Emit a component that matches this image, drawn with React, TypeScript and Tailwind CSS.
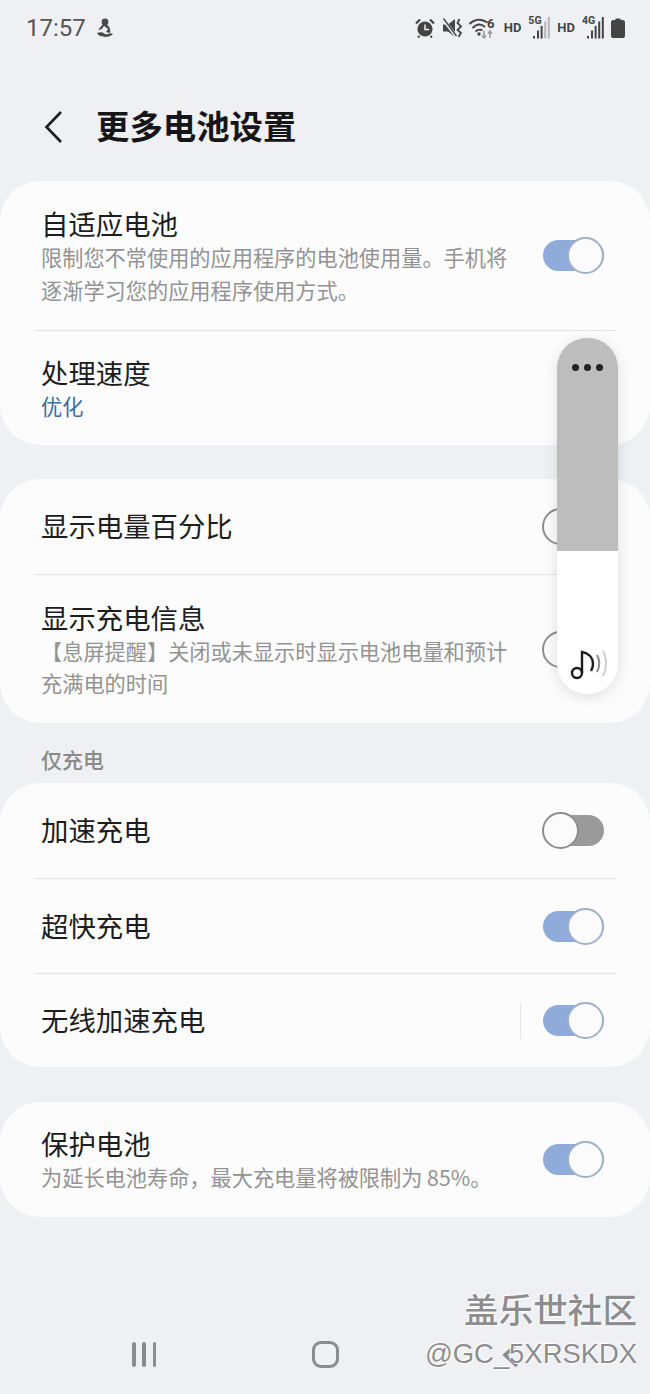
import type { ReactNode } from 'react';

const cjk = "font-['Noto_Sans_CJK_SC','Noto_Sans',sans-serif]";

function Toggle({ on }: { on: boolean }) {
  return (
    <div className={`relative h-[31px] w-[61px] shrink-0 rounded-full ${on ? 'bg-[#8fabd9]' : 'bg-[#9a9a9a]'}`}>
      <div
        className={`absolute top-[-3px] size-[37px] rounded-full border-2 bg-[#fbfbfb] ${
          on ? 'right-0 border-[#9fb0c8]' : 'left-[-1px] border-[#8e8e8e]'
        }`}
      />
    </div>
  );
}

function Row({
  title,
  sub,
  on,
  height,
  last,
  accent,
  sep,
}: {
  title: string;
  sub?: ReactNode;
  on?: boolean;
  height: string;
  last?: boolean;
  accent?: boolean;
  sep?: boolean;
}) {
  return (
    <div
      className={`ml-[34px] mr-[33px] flex items-center justify-between pl-[7px] pr-[13px] ${height} ${
        last ? '' : 'border-b border-[#e4e4e6]'
      }`}
    >
      <div className={`w-[470px] ${sub ? '' : 'pb-[3px]'}`}>
        <div className="text-[27.4px] leading-[36px] text-[#1d1d1f]">{title}</div>
        {sub && (
          <div className={`text-[21.2px] leading-[32.5px] ${accent ? 'text-[#3f6d9e]' : 'text-[#939393]'}`}>{sub}</div>
        )}
      </div>
      <div className="flex items-center">
        {sep && <div className="mr-[22px] h-[36px] w-px bg-[#e6e6e8]" />}
        {on !== undefined && <Toggle on={on} />}
      </div>
    </div>
  );
}

function StatusIcons() {
  return (
    <div className="flex items-center text-[#444]">
      {/* alarm */}
      <svg width="20" height="20" viewBox="0 0 20 20" className="text-[#444]">
        <circle cx="10" cy="11" r="7.6" fill="currentColor" />
        <path d="M10 6.5V11.5H14" fill="none" stroke="#eef0f4" strokeWidth="1.5" />
        <path d="M1 5.5 5 1.5M19 5.5 15 1.5" stroke="currentColor" strokeWidth="2.2" />
        <path d="M4.5 18 3 19.5M15.5 18 17 19.5" stroke="currentColor" strokeWidth="2" />
      </svg>
      {/* mute with vibrate */}
      <svg width="20" height="20" viewBox="0 0 20 20" className="ml-[8px]">
        <path d="M0 6.5H5L12 1V19L5 13.5H0Z" fill="currentColor" />
        <path d="M0 1 13 18" stroke="#eef0f4" strokeWidth="3.2" />
        <path d="M0.5 0.5 13.5 18" stroke="currentColor" strokeWidth="1.4" />
        <path d="M16.5 1 14.5 5 18 8.5 14.5 12 18 15 15.5 19" fill="none" stroke="currentColor" strokeWidth="1.8" />
      </svg>
      {/* wifi 6 */}
      <svg width="26" height="24" viewBox="0 0 26 24" className="ml-[6px]">
        <path d="M0.5 8C6 2.5 13 2.5 18.5 6.5" fill="none" stroke="currentColor" strokeWidth="2" />
        <path d="M3.5 12C8 7.5 12 7.5 16 11" fill="none" stroke="currentColor" strokeWidth="2" />
        <path d="M6.5 15.5C9.5 13 11 13 13.5 14.5" fill="none" stroke="currentColor" strokeWidth="2" />
        <circle cx="10" cy="18" r="1.7" fill="currentColor" />
        <path d="M15 15V22M13 19.5 15 22 17 19.5" fill="none" stroke="#9b9b9b" strokeWidth="1.6" />
        <path d="M21 22V15M19 17.5 21 15 23 17.5" fill="none" stroke="#9b9b9b" strokeWidth="1.6" />
        <text x="18" y="12" fontSize="13" fontWeight="700" fontFamily="Roboto, sans-serif" fill="currentColor">
          6
        </text>
      </svg>
      <span className="ml-[9px] font-['Roboto',sans-serif] text-[13px] font-bold">HD</span>
      <Signal label="5G" dim className="ml-[7px]" />
      <span className="ml-[6px] font-['Roboto',sans-serif] text-[13px] font-bold">HD</span>
      <Signal label="4G" className="ml-[7px]" />
      {/* battery */}
      <svg width="14" height="20" viewBox="0 0 14 20" className="ml-[6px]">
        <path d="M4.5 0.5H9.5V2H12C13 2 14 3 14 4V18C14 19 13 20 12 20H2C1 20 0 19 0 18V4C0 3 1 2 2 2H4.5Z" fill="currentColor" />
      </svg>
    </div>
  );
}

function Signal({ label, dim, className }: { label: string; dim?: boolean; className?: string }) {
  const bars = [8, 12.5, 17, 21.5];
  return (
    <div className={`relative h-[24px] w-[23px] ${className ?? ''}`}>
      <span className="absolute left-0 top-[-2px] font-['Roboto',sans-serif] text-[10.5px] font-bold leading-[14px]">
        {label}
      </span>
      <svg width="23" height="24" viewBox="0 0 23 24" className="absolute inset-0">
        <rect x="5" y="20" width="2" height="2.5" fill="currentColor" />
        {bars.map((h, i) => (
          <rect
            key={h}
            x={9 + i * 3.6}
            y={22.5 - h}
            width="2"
            height={h}
            fill={dim && i > 1 ? '#b5b5b5' : 'currentColor'}
          />
        ))}
      </svg>
    </div>
  );
}

export default function App() {
  return (
    <div className={`relative h-[1394px] w-[650px] overflow-hidden bg-[#eef0f4] ${cjk}`}>
      {/* status bar */}
      <div className="flex h-[56px] items-center justify-between pl-[26px] pr-[25px]">
        <div className="flex items-center">
          <span className="font-['Roboto',sans-serif] text-[24px] text-[#555]">17:57</span>
          <svg width="18" height="20" viewBox="0 0 18 20" className="ml-[10px] text-[#4b4b4b]">
            <circle cx="9" cy="4" r="3.4" fill="currentColor" />
            <path d="M7 6 2 12 6 11 8 8 12 11 10 14 14 15C15 11 13 7 9 6Z" fill="currentColor" />
            <path d="M1 15C3 19.5 13 20.5 17 16C14 14 12 17 9 16C7 14 4 14 1 15Z" fill="currentColor" />
          </svg>
        </div>
        <StatusIcons />
      </div>

      {/* header */}
      <div className="flex h-[125px] items-start pl-[44px] pt-[50px]">
        <svg width="20" height="34" viewBox="0 0 20 34" className="mt-[4px] text-[#1d1d1f]">
          <path d="M17 2 2.5 17 17 32" fill="none" stroke="currentColor" strokeWidth="2.6" />
        </svg>
        <h1 className="ml-[32px] text-[33.4px] font-bold leading-[38px] text-[#161618]">更多电池设置</h1>
      </div>

      {/* settings */}
      <div className="rounded-[40px] bg-[#fcfcfd]">
        <Row
          title="自适应电池"
          sub="限制您不常使用的应用程序的电池使用量。手机将逐渐学习您的应用程序使用方式。"
          on
          height="h-[150px]"
        />
        <Row title="处理速度" sub="优化" accent height="h-[114px]" last />
      </div>

      <div className="mt-[34px] rounded-[40px] bg-[#fcfcfd]">
        <Row title="显示电量百分比" on={false} height="h-[96px]" />
        <Row
          title="显示充电信息"
          sub="【息屏提醒】关闭或未显示时显示电池电量和预计充满电的时间"
          on={false}
          height="h-[148px]"
          last
        />
      </div>

      <div className="pl-[41px] pt-[23px] text-[21px] font-medium leading-[26px] text-[#8a8a8d]">仅充电</div>

      <div className="mt-[11px] rounded-[40px] bg-[#fcfcfd]">
        <Row title="加速充电" on={false} height="h-[96px]" />
        <Row title="超快充电" on height="h-[95px]" />
        <Row title="无线加速充电" on sep height="h-[93px]" last />
      </div>

      <div className="mt-[35px] rounded-[40px] bg-[#fcfcfd]">
        <Row title="保护电池" sub="为延长电池寿命，最大充电量将被限制为 85%。" on height="h-[115px]" last />
      </div>

      {/* nav bar */}
      <div className="mt-[124px] flex items-center pl-[132px]">
        <div className="flex w-[24px] justify-between">
          <div className="h-[25px] w-[3.5px] rounded-full bg-[#8b8b8e]" />
          <div className="h-[25px] w-[3.5px] rounded-full bg-[#8b8b8e]" />
          <div className="h-[25px] w-[3.5px] rounded-full bg-[#8b8b8e]" />
        </div>
        <div className="ml-[156px] size-[27px] rounded-[9px] border-[3.5px] border-[#8b8b8e]" />
      </div>

      {/* floating sound panel */}
      <div className="absolute left-[557px] top-[338px] flex h-[356px] w-[61px] flex-col overflow-hidden rounded-[30px] bg-white shadow-[0_3px_14px_rgba(0,0,0,0.12)]">
        <div className="flex h-[213px] justify-center gap-[5px] bg-[#bdbdbd] pt-[26px]">
          <div className="size-[7px] rounded-full bg-[#222]" />
          <div className="size-[7px] rounded-full bg-[#222]" />
          <div className="size-[7px] rounded-full bg-[#222]" />
        </div>
        <div className="flex flex-1 items-end pb-[14px] pl-[13px]">
          <svg width="38" height="32" viewBox="0 0 38 32">
            <circle cx="7" cy="25" r="5" fill="none" stroke="#1b1b1b" strokeWidth="2.4" />
            <path d="M12 25V4C18 5 23 9 23 16 23 19 22 21 21 23" fill="none" stroke="#1b1b1b" strokeWidth="2.4" />
            <path d="M27 7C30 12 30 19 27 24" fill="none" stroke="#8a8a8a" strokeWidth="2" />
            <path d="M33 3C37 10 37 20 33 28" fill="none" stroke="#d0d0d0" strokeWidth="2" />
          </svg>
        </div>
      </div>

      {/* back key, under the watermark */}
      <svg width="20" height="28" viewBox="0 0 20 28" className="absolute left-[501px] top-[1341px] text-[#8b8b8e]">
        <path d="M16 3 4 14 16 25" fill="none" stroke="currentColor" strokeWidth="3.5" />
      </svg>

      {/* watermark */}
      <div className="absolute right-[13px] top-[1287px] flex flex-col items-end text-[#8d8d8f] [text-shadow:1px_1px_0_#fff,-1px_-1px_0_#fff]">
        <div className="text-[34.6px] font-medium leading-[42px]">盖乐世社区</div>
        <div className="mt-[7px] font-['Liberation_Sans',sans-serif] text-[27.4px] leading-[36px]">@GC_5XRSKDX</div>
      </div>
    </div>
  );
}
